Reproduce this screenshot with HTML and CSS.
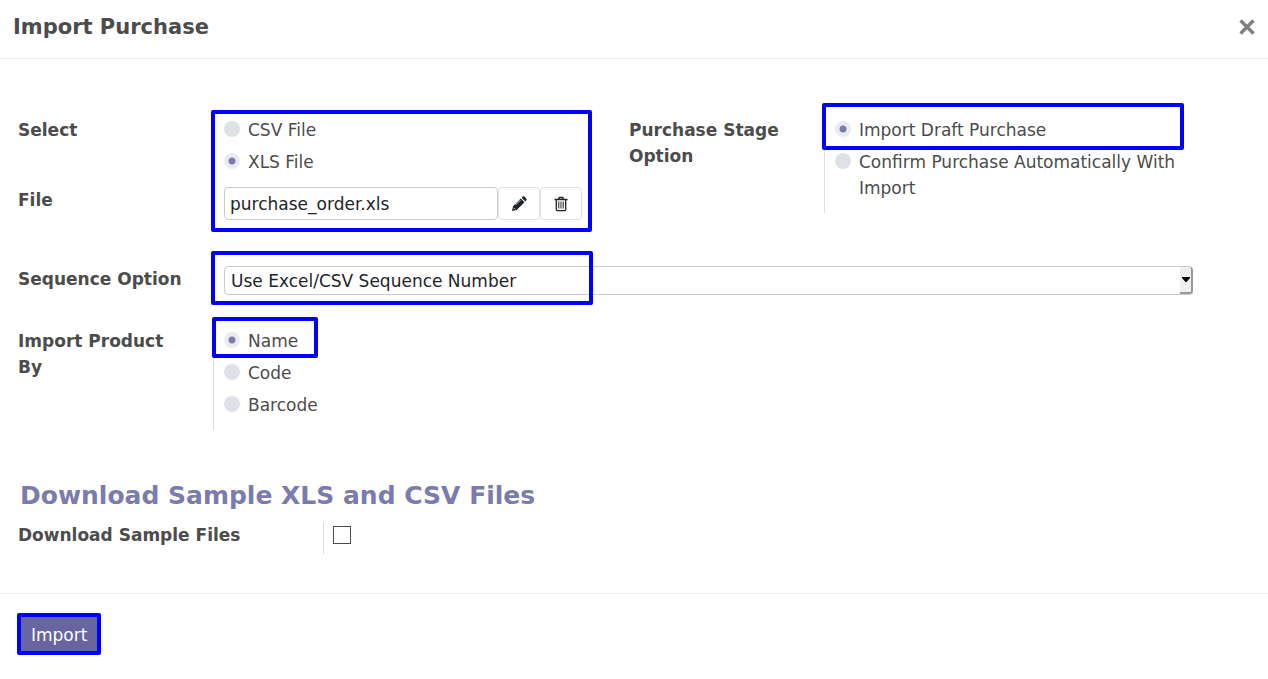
FILE: index.html
```html
<!DOCTYPE html>
<html lang="en">
<head>
<meta charset="utf-8">
<title>Import Purchase</title>
<meta name="viewport" content="width=device-width, initial-scale=1">
<link rel="stylesheet" href="styles.css">
</head>
<body>
<form class="dialog">
  <header class="dialog-header">
    <h1 class="dialog-title">Import Purchase</h1>
    <button class="close" type="button" aria-label="Close">
      <svg width="16" height="16" viewBox="0 0 16 16"><path d="M1.500 1.500 14.500 14.500M14.500 1.500 1.500 14.500" stroke="#7f7f7f" stroke-width="3.300" fill="none"/></svg>
    </button>
  </header>

  <main class="dialog-body">
    <div class="columns">
      <div class="group framed">
        <span class="label" id="type-label">Select</span>
        <div class="field radios" role="radiogroup" aria-labelledby="type-label">
          <label class="option"><input type="radio" name="type">CSV File</label>
          <label class="option"><input type="radio" name="type" checked>XLS File</label>
        </div>
        <label class="label" for="file">File</label>
        <div class="field file-row">
          <input class="text" id="file" type="text" value="purchase_order.xls" readonly>
          <button class="icon-button" type="button" aria-label="Edit">
            <svg width="16" height="16" viewBox="0 0 16 16"><path fill="#212529" d="M1 15 2 10.300 9.800 2.500 13.500 6.200 5.700 14zM10.600 1.700 11.700.6Q12.500 0 13.300.6L15.400 2.700Q16 3.500 15.400 4.300L14.300 5.400z"/><path stroke="#fff" stroke-width=".8" fill="none" d="M4.500 9 9.500 4M2.500 11.800 4.200 13.500"/></svg>
          </button>
          <button class="icon-button" type="button" aria-label="Clear">
            <svg width="14" height="16" viewBox="0 0 14 16" fill="none" stroke="#212529"><path stroke-width="1.300" d="M.5 3.500H13.500M4.500 3.500 5.200 1.500H8.800L9.500 3.500M2.300 3.500V13.500Q2.300 14.700 3.500 14.700H10.500Q11.700 14.700 11.700 13.500V3.500"/><path d="M4.800 5.500V12.500M7 5.500V12.500M9.200 5.500V12.500"/></svg>
          </button>
        </div>
        <span class="frame frame-file"></span>
      </div>

      <div class="group">
        <span class="label" id="stage-label">Purchase Stage Option</span>
        <div class="field radios framed" role="radiogroup" aria-labelledby="stage-label">
          <label class="option"><input type="radio" name="stage" checked>Import Draft Purchase</label>
          <label class="option"><input type="radio" name="stage">Confirm Purchase Automatically With Import</label>
          <span class="frame frame-stage"></span>
        </div>
      </div>
    </div>

    <div class="group sequence">
      <label class="label" for="sequence">Sequence Option</label>
      <div class="field framed">
        <select class="select" id="sequence"><option>Use Excel/CSV Sequence Number</option></select>
        <span class="arrow"><svg width="8" height="5" viewBox="0 0 8 5"><path d="M0 0H8V1L4.500 5H3.500L0 1z"/></svg></span>
        <span class="frame frame-sequence"></span>
      </div>
    </div>

    <div class="group product">
      <span class="label" id="product-label">Import Product By</span>
      <div class="field radios framed" role="radiogroup" aria-labelledby="product-label">
        <label class="option"><input type="radio" name="product" checked>Name</label>
        <label class="option"><input type="radio" name="product">Code</label>
        <label class="option"><input type="radio" name="product">Barcode</label>
        <span class="frame frame-product"></span>
      </div>
    </div>

    <h2 class="section-title">Download Sample XLS and CSV Files</h2>
    <div class="sample">
      <label class="label" for="sample">Download Sample Files</label>
      <div class="field sample-field"><input class="check" id="sample" type="checkbox"></div>
    </div>
  </main>

  <footer class="dialog-footer">
    <button class="primary" type="submit">Import</button>
  </footer>
</form>
</body>
</html>
```

FILE: styles.css
```css
* { box-sizing: border-box; }

body {
  margin: 0;
  background: #fff;
  color: #4c4c4c;
  font: 17px/26px "DejaVu Sans", Verdana, sans-serif;
}

button, input, select { font: inherit; margin: 0; }

.dialog-header {
  display: flex;
  align-items: center;
  justify-content: space-between;
  height: 59px;
  padding: 0 13px 4px;
  border-bottom: 1px solid #e9ecef;
}

.dialog-title { margin: 0; font-size: 21px; font-weight: bold; }

.close { display: flex; padding: 0; border: 0; background: none; }

.dialog-body { padding: 58px 75px 39px 18px; }

.columns {
  display: grid;
  grid-template-columns: 1fr 1fr;
  column-gap: 47px;
  align-items: start;
}

.group {
  display: grid;
  grid-template-columns: 195px minmax(0, 1fr);
}

.label { padding-right: 28px; font-weight: bold; }

.field { padding-left: 10px; border-left: 1px solid #ddd; }

.radios {
  display: flex;
  flex-direction: column;
  gap: 6px;
  padding-bottom: 12px;
}

.option { display: flex; gap: 8px; }

.option input {
  appearance: none;
  flex: none;
  width: 16px;
  height: 16px;
  margin-top: 4px;
  border-radius: 50%;
  background: #dee2e6;
}

.option input:checked {
  background: radial-gradient(circle, #7c7bad 3px, #e9ecef 4px);
}

.framed { position: relative; }

.frame {
  position: absolute;
  border: 4px solid #00f;
  border-radius: 2px;
  pointer-events: none;
}

.frame-file { top: -7px; right: -10px; bottom: -12px; left: 193px; }
.frame-stage { top: -14px; right: 9px; left: -3px; height: 47px; }
.frame-sequence { top: -15px; left: -3px; width: 382px; height: 54px; }
.frame-product { top: -11px; left: -2px; width: 106px; height: 41px; }

.file-row { display: flex; height: 33px; }

.text {
  flex: 1;
  min-width: 0;
  padding: 0 5px;
  border: 1px solid #ccc;
  border-radius: 4px;
  background: #fff;
  color: #212529;
}

.icon-button {
  display: flex;
  flex: none;
  align-items: center;
  justify-content: center;
  width: 42px;
  padding: 0;
  border: 1px solid #dee2e6;
  border-radius: 4px;
  background: #fff;
}

.sequence { margin-top: 46px; }

.select {
  display: block;
  appearance: none;
  width: 100%;
  height: 29px;
  padding: 0 6px;
  border: 1px solid #ccc;
  border-radius: 4px;
  background: #fff;
  color: #212529;
}

.arrow {
  position: absolute;
  top: 1px;
  right: 0;
  bottom: 1px;
  display: flex;
  align-items: center;
  justify-content: center;
  width: 13px;
  border-right: 2px solid #999;
  border-bottom: 2px solid #999;
  border-radius: 0 4px 3px 0;
  background: #f0f0ee;
  pointer-events: none;
}

.product { margin-top: 33px; }

.section-title {
  margin: 46px 2px 6px;
  color: #7c7bad;
  font-size: 25px;
  line-height: 40px;
}

.sample {
  display: grid;
  grid-template-columns: 305px 1fr;
}

.sample-field { height: 32px; padding-top: 4px; padding-left: 9px; }

.check {
  display: block;
  appearance: none;
  width: 18px;
  height: 18px;
  border: 1px solid #4c4c4c;
  background: #fff;
}

.dialog-footer {
  padding: 19px 17px;
  border-top: 1px solid #e9ecef;
}

.primary {
  height: 42px;
  padding: 2px 10px 0;
  border: 4px solid #00f;
  border-radius: 2px;
  background: #66659f;
  color: #fff;
}
```
